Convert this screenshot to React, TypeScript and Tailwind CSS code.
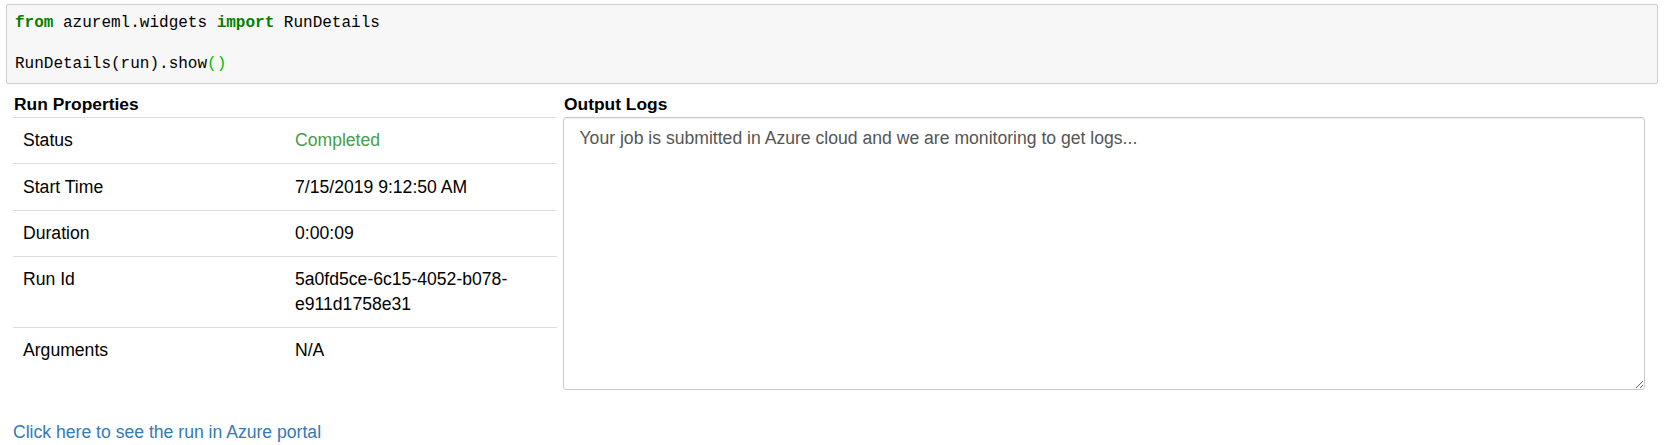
import React from "react";

const rows: { label: string; value: string; green?: boolean }[] = [
  { label: "Status", value: "Completed", green: true },
  { label: "Start Time", value: "7/15/2019 9:12:50 AM" },
  { label: "Duration", value: "0:00:09" },
  { label: "Run Id", value: "5a0fd5ce-6c15-4052-b078-e911d1758e31" },
  { label: "Arguments", value: "N/A" },
];

const CodeCell: React.FC = () => (
  <div className="ml-[6px] mt-[4px] w-[1652px] rounded-[2px] border border-[#cfcfcf] bg-[#f7f7f7] pl-[8px] pt-[7.5px] pb-[8.5px] font-['Liberation_Mono',monospace] text-[16px] leading-[20.65px] text-black">
    <div className="whitespace-pre">
      <span className="font-bold text-[#008000]">from</span> azureml.widgets{" "}
      <span className="font-bold text-[#008000]">import</span> RunDetails
    </div>
    <div className="whitespace-pre">{" "}</div>
    <div className="whitespace-pre">
      RunDetails(run).show<span className="text-[#00bb00]">()</span>
    </div>
  </div>
);

export default function App() {
  return (
    <div className="min-h-[445px] w-[1667px] bg-white font-['Liberation_Sans',Arial,sans-serif] text-[17.6px] text-black">
      <CodeCell />

      <div className="pl-[13px]">
        <div className="flex gap-[6px]">
          <div className="w-[544px]">
            <h3 className="mt-[8px] pl-[1px] text-[17.4px] font-bold leading-[25px]">Run Properties</h3>
            <div>
              {rows.map((r) => (
                <div key={r.label} className="flex border-t border-[#dddddd] py-[10.35px] leading-[24.6px]">
                  <div className="w-1/2 px-[10px]">{r.label}</div>
                  <div className={`w-1/2 px-[10px] ${r.green ? "text-[#43a047]" : ""}`}>{r.value}</div>
                </div>
              ))}
            </div>
          </div>

          <div className="w-[1082px]">
            <h3 className="mt-[8px] pl-[1px] text-[17.4px] font-bold leading-[25px]">Output Logs</h3>
            <textarea
              readOnly
              className="block h-[273px] w-[1082px] rounded-[3px] border border-[#cccccc] px-[15.5px] pt-[8px] text-[17.6px] leading-[24.6px] text-[#555555] shadow-[inset_0_1px_1px_rgba(0,0,0,0.075)] outline-none"
              value="Your job is submitted in Azure cloud and we are monitoring to get logs..."
            />
          </div>
        </div>

        <a href="#" className="mt-[30.5px] block leading-[24.6px] text-[#337ab7]">
          Click here to see the run in Azure portal
        </a>
      </div>
    </div>
  );
}
